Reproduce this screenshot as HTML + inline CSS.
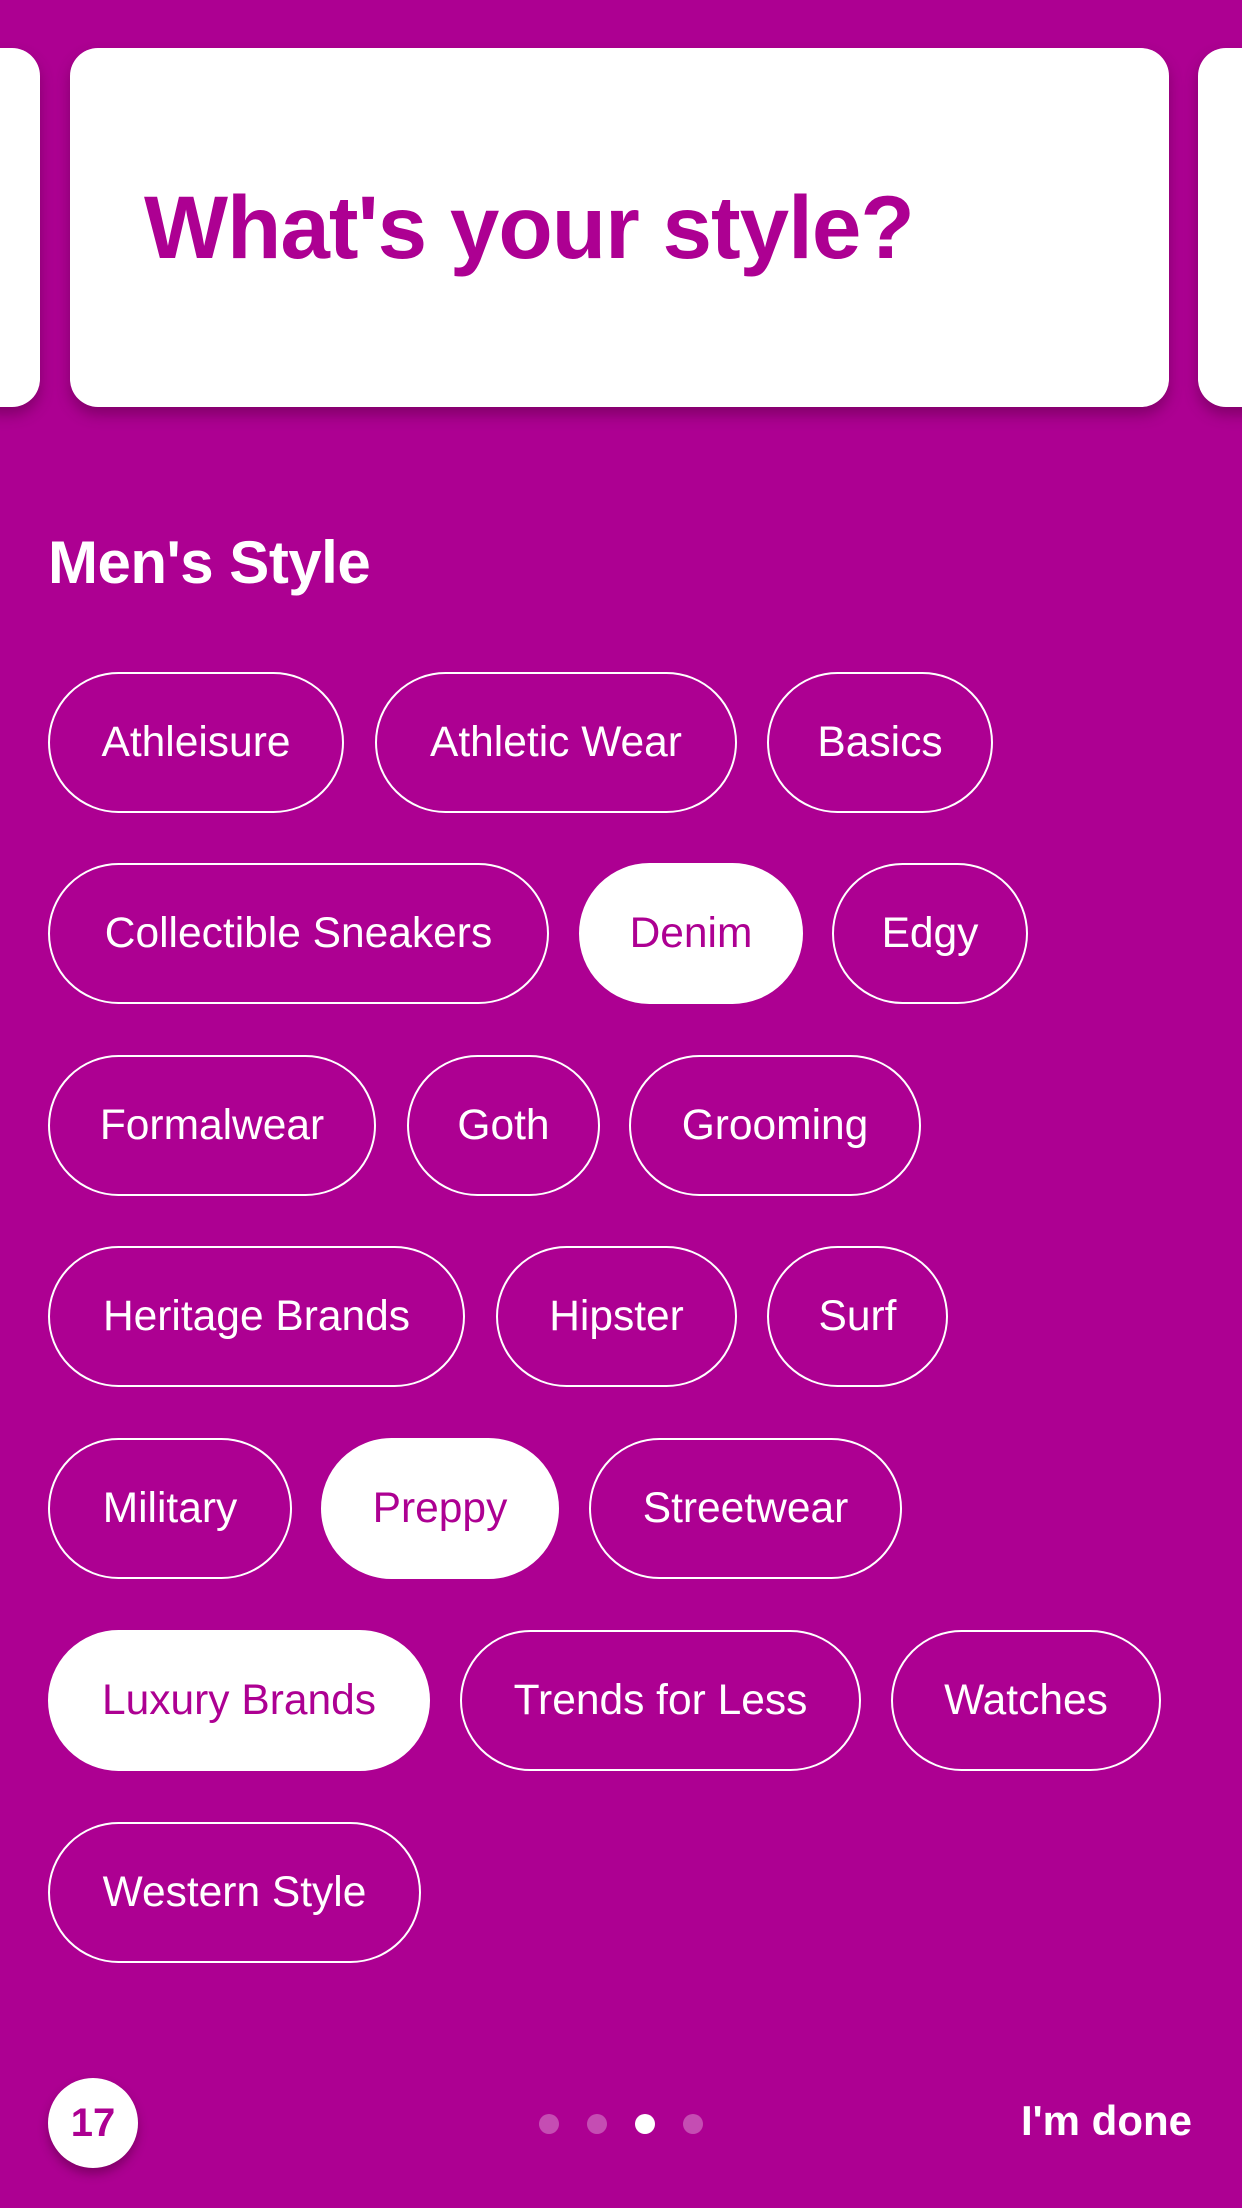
<!DOCTYPE html>
<html><head><meta charset="utf-8"><style>
*{margin:0;padding:0;box-sizing:border-box}
body{width:1242px;height:2208px;background:#ad0092;font-family:"Liberation Sans",sans-serif;position:relative;overflow:hidden}
.card{position:absolute;top:48px;height:359px;background:#fff;border-radius:28px;box-shadow:0 8px 14px rgba(80,0,60,.45)}
h1{position:absolute;left:144px;top:176px;font-size:89px;font-weight:bold;color:#ad0092;letter-spacing:-1px;white-space:nowrap}
h2{position:absolute;left:48px;top:528px;font-size:60px;font-weight:bold;color:#fff;letter-spacing:-0.5px}
.c{position:absolute;height:141px;border:2px solid #fff;border-radius:71px;color:#fff;font-size:42.5px;display:flex;align-items:center;justify-content:center;white-space:nowrap}
.s{background:#fff;color:#ad0092}
.num{position:absolute;left:48px;top:2078px;width:90px;height:90px;border-radius:50%;background:#fff;color:#ad0092;font-weight:bold;font-size:40px;display:flex;align-items:center;justify-content:center;box-shadow:0 6px 10px rgba(60,0,40,.4)}
.d{position:absolute;top:2114px;width:20px;height:20px;border-radius:50%;background:rgba(255,255,255,.3)}
.done{position:absolute;right:50px;top:2097px;color:#fff;font-weight:bold;font-size:42px}
</style></head><body>
<div class="card" style="left:-30px;width:70px"></div>
<div class="card" style="left:70px;width:1099px"></div>
<div class="card" style="left:1198px;width:80px"></div>
<h1>What's your style?</h1>
<h2>Men's Style</h2>
<div class="c" style="left:48px;top:672px;width:296px">Athleisure</div>
<div class="c" style="left:375px;top:672px;width:362px">Athletic Wear</div>
<div class="c" style="left:767px;top:672px;width:226px">Basics</div>
<div class="c" style="left:48px;top:863px;width:501px">Collectible Sneakers</div>
<div class="c s" style="left:579px;top:863px;width:224px">Denim</div>
<div class="c" style="left:832px;top:863px;width:196px">Edgy</div>
<div class="c" style="left:48px;top:1055px;width:328px">Formalwear</div>
<div class="c" style="left:407px;top:1055px;width:193px">Goth</div>
<div class="c" style="left:629px;top:1055px;width:292px">Grooming</div>
<div class="c" style="left:48px;top:1246px;width:417px">Heritage Brands</div>
<div class="c" style="left:496px;top:1246px;width:241px">Hipster</div>
<div class="c" style="left:767px;top:1246px;width:181px">Surf</div>
<div class="c" style="left:48px;top:1438px;width:244px">Military</div>
<div class="c s" style="left:321px;top:1438px;width:238px">Preppy</div>
<div class="c" style="left:589px;top:1438px;width:313px">Streetwear</div>
<div class="c s" style="left:48px;top:1630px;width:382px">Luxury Brands</div>
<div class="c" style="left:460px;top:1630px;width:401px">Trends for Less</div>
<div class="c" style="left:891px;top:1630px;width:270px">Watches</div>
<div class="c" style="left:48px;top:1822px;width:373px">Western Style</div>
<div class="num">17</div>
<div class="d" style="left:539px"></div>
<div class="d" style="left:587px"></div>
<div class="d" style="left:635px;background:#fff"></div>
<div class="d" style="left:683px"></div>
<div class="done">I'm done</div>
</body></html>
